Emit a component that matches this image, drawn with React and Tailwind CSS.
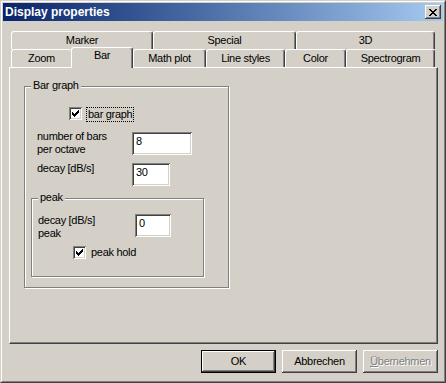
import React from "react";

// Win2000-style bevels, written out in full so Tailwind picks them up.
const raised =
  "shadow-[inset_-1px_-1px_#404040,inset_1px_1px_#ffffff,inset_-2px_-2px_#808080,inset_2px_2px_#d4d0c8]";
const sunken =
  "shadow-[inset_1px_1px_#808080,inset_-1px_-1px_#ffffff,inset_2px_2px_#404040,inset_-2px_-2px_#d4d0c8]";

const backRow = [
  { label: "Marker", w: "w-[142px]" },
  { label: "Special", w: "w-[143px]" },
  { label: "3D", w: "w-[139px]" },
];

const frontRow = [
  { label: "Zoom", w: "w-[60px]", noRight: true },
  { label: "Bar", w: "w-[62px]", selected: true },
  { label: "Math plot", w: "w-[73px]" },
  { label: "Line styles", w: "w-[79px]" },
  { label: "Color", w: "w-[61px]" },
  { label: "Spectrogram", w: "w-[89px]" },
];

function Tab({ label, w, selected, noRight }) {
  if (selected) {
    return (
      <div
        className={`${w} relative z-10 -mt-[2px] -mb-px flex h-[21px] items-start justify-center rounded-t-[3px] border-l border-t border-r border-white border-r-[#404040] bg-[#d4d0c8] pt-[1px] leading-[13px] shadow-[inset_-1px_0_#808080]`}
      >
        {label}
      </div>
    );
  }
  return (
    <div
      className={`${w} flex h-[18px] items-center justify-center rounded-t-[3px] border-l border-t border-white bg-[#d4d0c8] leading-[13px] ${
        noRight ? "" : "border-r border-r-[#404040] shadow-[inset_-1px_0_#808080]"
      }`}
    >
      {label}
    </div>
  );
}

function Checkbox() {
  return (
    <div className={`flex h-[13px] w-[13px] shrink-0 items-center justify-center bg-white ${sunken}`}>
      <svg width="7" height="7" viewBox="0 0 7 7" shapeRendering="crispEdges">
        <path
          fill="#000"
          d="M6 0h1v1H6zM5 1h2v1H5zM0 2h1v1H0zM4 2h3v1H4zM0 3h2v1H0zM3 3h3v1H3zM0 4h5v1H0zM1 5h3v1H1zM2 6h1v1H2z"
        />
      </svg>
    </div>
  );
}

function Field({ value, w }) {
  return (
    <div className={`${w} h-[23px] shrink-0 bg-white pl-[4px] pt-[3px] leading-[13px] ${sunken}`}>
      {value}
    </div>
  );
}

function GroupBox({ label, className, children }) {
  return (
    <div
      className={`relative border border-[#808080] shadow-[1px_1px_0_#ffffff,inset_1px_1px_0_#ffffff] ${className}`}
    >
      <span className="absolute -top-[8px] left-[6px] bg-[#d4d0c8] px-[2px] leading-[13px]">
        {label}
      </span>
      {children}
    </div>
  );
}

function Button({ children, isDefault, disabled }) {
  return (
    <div
      className={`flex h-[23px] w-[75px] items-center justify-center leading-[13px] ${
        isDefault ? "border border-black" : ""
      } ${raised} ${disabled ? "text-[#808080] [text-shadow:1px_1px_0_#ffffff]" : ""}`}
    >
      {children}
    </div>
  );
}

export default function App() {
  return (
    <div className="h-[383px] w-[446px] border border-b-[#404040] border-l-[#d4d0c8] border-r-[#404040] border-t-[#d4d0c8] bg-[#d4d0c8] font-['Liberation_Sans',Arial,sans-serif] text-[11px] tracking-[-0.3px] text-black">
      <div className="flex h-full flex-col border border-b-[#808080] border-l-white border-r-[#808080] border-t-white p-px">
        {/* Title bar */}
        <div className="flex h-[18px] shrink-0 items-center justify-between bg-gradient-to-r from-[#0a246a] to-[#a6caf0] pl-[2px] pr-[2px]">
          <span className="text-[12px] font-bold tracking-normal text-white">Display properties</span>
          <div className={`flex h-[14px] w-[16px] items-center justify-center bg-[#d4d0c8] ${raised}`}>
            <svg width="8" height="7" viewBox="0 0 8 7" shapeRendering="crispEdges">
              <path
                fill="#000"
                d="M0 0h2v1H0zM6 0h2v1H6zM1 1h2v1H1zM5 1h2v1H5zM2 2h4v1H2zM3 3h2v1H3zM2 4h4v1H2zM1 5h2v1H1zM5 5h2v1H5zM0 6h2v1H0zM6 6h2v1H6z"
              />
            </svg>
          </div>
        </div>

        {/* Body */}
        <div className="flex flex-col pl-[6px] pt-[10px]">
          <div className="ml-[2px] flex">
            {backRow.map((t) => (
              <Tab key={t.label} {...t} />
            ))}
          </div>
          <div className="ml-[2px] flex h-[18px] items-start">
            {frontRow.map((t) => (
              <Tab key={t.label} {...t} />
            ))}
          </div>

          {/* Tab page */}
          <div className="h-[277px] w-[429px] border border-b-[#404040] border-l-white border-r-[#404040] border-t-white shadow-[inset_-1px_-1px_#808080]">
            <GroupBox label="Bar graph" className="ml-[14px] mt-[18px] h-[202px] w-[205px]">
              <div className="ml-[44px] mt-[20px] flex items-start">
                <Checkbox />
                <span className="ml-[4px] border border-dotted border-black px-[1px] leading-[13px]">
                  bar graph
                </span>
              </div>

              <div className="ml-[12px] mt-[8px] flex items-start">
                <div className="w-[95px] leading-[13px]">
                  number of bars
                  <br />
                  per octave
                </div>
                <div className="mt-[2px]">
                  <Field value="8" w="w-[60px]" />
                </div>
              </div>

              <div className="ml-[12px] mt-[6px] flex items-start">
                <div className="w-[95px] leading-[13px]">decay [dB/s]</div>
                <div className="mt-[1px]">
                  <Field value="30" w="w-[38px]" />
                </div>
              </div>

              <GroupBox label="peak" className="ml-[6px] mt-[12px] h-[79px] w-[173px]">
                <div className="ml-[6px] mt-[15px] flex items-start">
                  <div className="w-[97px] leading-[13px]">
                    decay [dB/s]
                    <br />
                    peak
                  </div>
                  <Field value="0" w="w-[36px]" />
                </div>
                <div className="ml-[41px] mt-[6px] flex items-start">
                  <Checkbox />
                  <span className="ml-[5px] leading-[13px]">peak hold</span>
                </div>
              </GroupBox>
            </GroupBox>
          </div>

          {/* Dialog buttons */}
          <div className="mt-[6px] flex w-[429px] justify-end gap-[6px]">
            <Button isDefault>OK</Button>
            <Button>Abbrechen</Button>
            <Button disabled>
              <span className="underline">Ü</span>bernehmen
            </Button>
          </div>
        </div>
      </div>
    </div>
  );
}
